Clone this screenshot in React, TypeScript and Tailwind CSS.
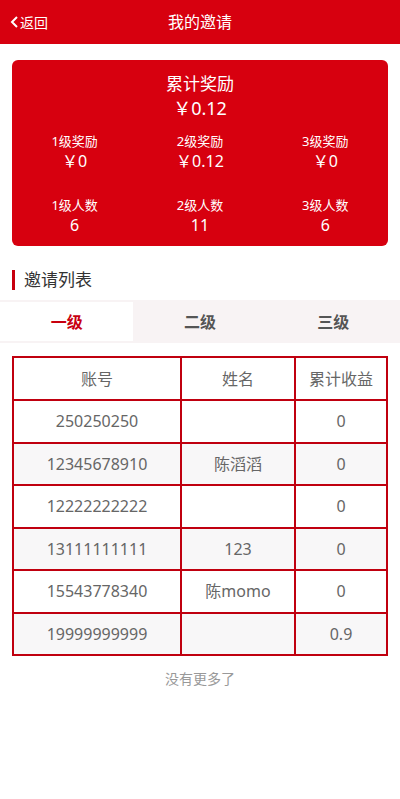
import React from "react";

const font = { fontFamily: '"Noto Sans", "Noto Sans CJK SC", sans-serif' };

const rows = [
  ["250250250", "", "0"],
  ["12345678910", "陈滔滔", "0"],
  ["12222222222", "", "0"],
  ["13111111111", "123", "0"],
  ["15543778340", "陈momo", "0"],
  ["19999999999", "", "0.9"],
];

function Stat({ label, value }: { label: string; value: string }) {
  return (
    <div className="flex flex-col items-center">
      <div className="text-[13px] leading-[18px]">{label}</div>
      <div className="text-[16px] leading-[22px]">{value}</div>
    </div>
  );
}

export default function App() {
  return (
    <div className="w-[400px] min-h-[799px] bg-white text-[#333]" style={font}>
      <div className="relative h-[44px] bg-[#d7000f] flex items-center justify-center text-white">
        <div className="absolute left-[10px] top-0 h-[44px] flex items-center text-[14px]">
          <svg width="9" height="12" viewBox="0 0 9 12" className="mr-[1px]">
            <path d="M7 1 L2 6 L7 11" fill="none" stroke="white" strokeWidth="2" />
          </svg>
          <span>返回</span>
        </div>
        <div className="text-[16px]">我的邀请</div>
      </div>

      <div className="px-[12px] pt-[16px]">
        <div className="bg-[#d7000f] rounded-[6px] h-[186px] text-white flex flex-col items-center pt-[12px]">
          <div className="text-[17px] leading-[24px]">累计奖励</div>
          <div className="text-[18px] leading-[24px]">￥0.12</div>
          <div className="grid grid-cols-3 w-full mt-[12px] gap-y-[24px]">
            <Stat label="1级奖励" value="￥0" />
            <Stat label="2级奖励" value="￥0.12" />
            <Stat label="3级奖励" value="￥0" />
            <Stat label="1级人数" value="6" />
            <Stat label="2级人数" value="11" />
            <Stat label="3级人数" value="6" />
          </div>
        </div>
      </div>

      <div className="flex items-center h-[54px] px-[12px] pt-[14px]">
        <div className="w-[3px] h-[20px] bg-[#c8000f]" />
        <div className="ml-[9px] text-[17px] text-[#333]">邀请列表</div>
      </div>

      <div className="bg-[#f8f3f4] h-[43px] pt-[2px] grid grid-cols-3">
        <div className="bg-white h-[39px] flex items-center justify-center text-[16px] font-bold text-[#c8000f]">一级</div>
        <div className="h-[39px] flex items-center justify-center text-[16px] font-semibold text-[#555]">二级</div>
        <div className="h-[39px] flex items-center justify-center text-[16px] font-semibold text-[#555]">三级</div>
      </div>

      <div className="px-[12px] pt-[13px]">
        <table className="w-full border-collapse border-2 border-[#c0000f] text-[16px] text-[#666]">
          <thead>
            <tr className="h-[43px]">
              <th className="border-2 border-[#c0000f] font-normal w-[168px]">账号</th>
              <th className="border-2 border-[#c0000f] font-normal w-[114px]">姓名</th>
              <th className="border-2 border-[#c0000f] font-normal">累计收益</th>
            </tr>
          </thead>
          <tbody>
            {rows.map((r, i) => (
              <tr key={i} className={i % 2 === 1 ? "h-[42.5px] bg-[#f8f7f8]" : "h-[42.5px] bg-white"}>
                <td className="border-2 border-[#c0000f] text-center">{r[0]}</td>
                <td className="border-2 border-[#c0000f] text-center">{r[1]}</td>
                <td className="border-2 border-[#c0000f] text-center">{r[2]}</td>
              </tr>
            ))}
          </tbody>
        </table>
      </div>

      <div className="text-center text-[14px] text-[#999] pt-[12px]">没有更多了</div>
    </div>
  );
}
